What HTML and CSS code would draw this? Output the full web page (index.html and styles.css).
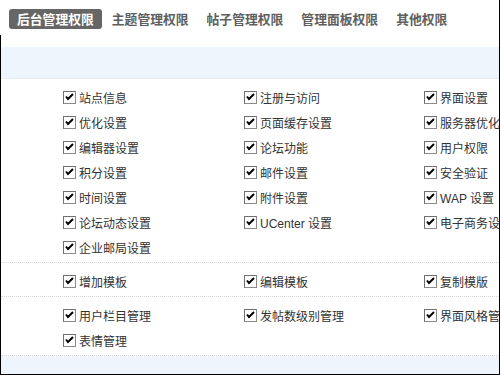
FILE: index.html
```html
<!DOCTYPE html>
<html lang="zh-CN">
<head>
<meta charset="utf-8">
<title>权限设置</title>
<link rel="stylesheet" href="styles.css">
</head>
<body>
<div class="page">
  <div class="tabs">
    <span class="tab active">后台管理权限</span>
    <span class="tab">主题管理权限</span>
    <span class="tab">帖子管理权限</span>
    <span class="tab">管理面板权限</span>
    <span class="tab">其他权限</span>
  </div>
  <div class="panel">
    <div class="band"></div>
    <div class="section">
      <label class="item"><svg class="cb" viewBox="0 0 13 13"><rect x="0.5" y="0.5" width="12" height="12" fill="#fff" stroke="#8a8a8a"/><path d="M0.5 12.5V0.5H12.5" fill="none" stroke="#6f6f6f"/><path d="M3 5.5L5 8L10 3" fill="none" stroke="#000" stroke-width="2"/></svg><span>站点信息</span></label>
      <label class="item"><svg class="cb" viewBox="0 0 13 13"><rect x="0.5" y="0.5" width="12" height="12" fill="#fff" stroke="#8a8a8a"/><path d="M0.5 12.5V0.5H12.5" fill="none" stroke="#6f6f6f"/><path d="M3 5.5L5 8L10 3" fill="none" stroke="#000" stroke-width="2"/></svg><span>注册与访问</span></label>
      <label class="item"><svg class="cb" viewBox="0 0 13 13"><rect x="0.5" y="0.5" width="12" height="12" fill="#fff" stroke="#8a8a8a"/><path d="M0.5 12.5V0.5H12.5" fill="none" stroke="#6f6f6f"/><path d="M3 5.5L5 8L10 3" fill="none" stroke="#000" stroke-width="2"/></svg><span>界面设置</span></label>
      <label class="item"><svg class="cb" viewBox="0 0 13 13"><rect x="0.5" y="0.5" width="12" height="12" fill="#fff" stroke="#8a8a8a"/><path d="M0.5 12.5V0.5H12.5" fill="none" stroke="#6f6f6f"/><path d="M3 5.5L5 8L10 3" fill="none" stroke="#000" stroke-width="2"/></svg><span>优化设置</span></label>
      <label class="item"><svg class="cb" viewBox="0 0 13 13"><rect x="0.5" y="0.5" width="12" height="12" fill="#fff" stroke="#8a8a8a"/><path d="M0.5 12.5V0.5H12.5" fill="none" stroke="#6f6f6f"/><path d="M3 5.5L5 8L10 3" fill="none" stroke="#000" stroke-width="2"/></svg><span>页面缓存设置</span></label>
      <label class="item"><svg class="cb" viewBox="0 0 13 13"><rect x="0.5" y="0.5" width="12" height="12" fill="#fff" stroke="#8a8a8a"/><path d="M0.5 12.5V0.5H12.5" fill="none" stroke="#6f6f6f"/><path d="M3 5.5L5 8L10 3" fill="none" stroke="#000" stroke-width="2"/></svg><span>服务器优化</span></label>
      <label class="item"><svg class="cb" viewBox="0 0 13 13"><rect x="0.5" y="0.5" width="12" height="12" fill="#fff" stroke="#8a8a8a"/><path d="M0.5 12.5V0.5H12.5" fill="none" stroke="#6f6f6f"/><path d="M3 5.5L5 8L10 3" fill="none" stroke="#000" stroke-width="2"/></svg><span>编辑器设置</span></label>
      <label class="item"><svg class="cb" viewBox="0 0 13 13"><rect x="0.5" y="0.5" width="12" height="12" fill="#fff" stroke="#8a8a8a"/><path d="M0.5 12.5V0.5H12.5" fill="none" stroke="#6f6f6f"/><path d="M3 5.5L5 8L10 3" fill="none" stroke="#000" stroke-width="2"/></svg><span>论坛功能</span></label>
      <label class="item"><svg class="cb" viewBox="0 0 13 13"><rect x="0.5" y="0.5" width="12" height="12" fill="#fff" stroke="#8a8a8a"/><path d="M0.5 12.5V0.5H12.5" fill="none" stroke="#6f6f6f"/><path d="M3 5.5L5 8L10 3" fill="none" stroke="#000" stroke-width="2"/></svg><span>用户权限</span></label>
      <label class="item"><svg class="cb" viewBox="0 0 13 13"><rect x="0.5" y="0.5" width="12" height="12" fill="#fff" stroke="#8a8a8a"/><path d="M0.5 12.5V0.5H12.5" fill="none" stroke="#6f6f6f"/><path d="M3 5.5L5 8L10 3" fill="none" stroke="#000" stroke-width="2"/></svg><span>积分设置</span></label>
      <label class="item"><svg class="cb" viewBox="0 0 13 13"><rect x="0.5" y="0.5" width="12" height="12" fill="#fff" stroke="#8a8a8a"/><path d="M0.5 12.5V0.5H12.5" fill="none" stroke="#6f6f6f"/><path d="M3 5.5L5 8L10 3" fill="none" stroke="#000" stroke-width="2"/></svg><span>邮件设置</span></label>
      <label class="item"><svg class="cb" viewBox="0 0 13 13"><rect x="0.5" y="0.5" width="12" height="12" fill="#fff" stroke="#8a8a8a"/><path d="M0.5 12.5V0.5H12.5" fill="none" stroke="#6f6f6f"/><path d="M3 5.5L5 8L10 3" fill="none" stroke="#000" stroke-width="2"/></svg><span>安全验证</span></label>
      <label class="item"><svg class="cb" viewBox="0 0 13 13"><rect x="0.5" y="0.5" width="12" height="12" fill="#fff" stroke="#8a8a8a"/><path d="M0.5 12.5V0.5H12.5" fill="none" stroke="#6f6f6f"/><path d="M3 5.5L5 8L10 3" fill="none" stroke="#000" stroke-width="2"/></svg><span>时间设置</span></label>
      <label class="item"><svg class="cb" viewBox="0 0 13 13"><rect x="0.5" y="0.5" width="12" height="12" fill="#fff" stroke="#8a8a8a"/><path d="M0.5 12.5V0.5H12.5" fill="none" stroke="#6f6f6f"/><path d="M3 5.5L5 8L10 3" fill="none" stroke="#000" stroke-width="2"/></svg><span>附件设置</span></label>
      <label class="item"><svg class="cb" viewBox="0 0 13 13"><rect x="0.5" y="0.5" width="12" height="12" fill="#fff" stroke="#8a8a8a"/><path d="M0.5 12.5V0.5H12.5" fill="none" stroke="#6f6f6f"/><path d="M3 5.5L5 8L10 3" fill="none" stroke="#000" stroke-width="2"/></svg><span>WAP 设置</span></label>
      <label class="item"><svg class="cb" viewBox="0 0 13 13"><rect x="0.5" y="0.5" width="12" height="12" fill="#fff" stroke="#8a8a8a"/><path d="M0.5 12.5V0.5H12.5" fill="none" stroke="#6f6f6f"/><path d="M3 5.5L5 8L10 3" fill="none" stroke="#000" stroke-width="2"/></svg><span>论坛动态设置</span></label>
      <label class="item"><svg class="cb" viewBox="0 0 13 13"><rect x="0.5" y="0.5" width="12" height="12" fill="#fff" stroke="#8a8a8a"/><path d="M0.5 12.5V0.5H12.5" fill="none" stroke="#6f6f6f"/><path d="M3 5.5L5 8L10 3" fill="none" stroke="#000" stroke-width="2"/></svg><span>UCenter 设置</span></label>
      <label class="item"><svg class="cb" viewBox="0 0 13 13"><rect x="0.5" y="0.5" width="12" height="12" fill="#fff" stroke="#8a8a8a"/><path d="M0.5 12.5V0.5H12.5" fill="none" stroke="#6f6f6f"/><path d="M3 5.5L5 8L10 3" fill="none" stroke="#000" stroke-width="2"/></svg><span>电子商务设置</span></label>
      <label class="item"><svg class="cb" viewBox="0 0 13 13"><rect x="0.5" y="0.5" width="12" height="12" fill="#fff" stroke="#8a8a8a"/><path d="M0.5 12.5V0.5H12.5" fill="none" stroke="#6f6f6f"/><path d="M3 5.5L5 8L10 3" fill="none" stroke="#000" stroke-width="2"/></svg><span>企业邮局设置</span></label>
    </div>
    <div class="section">
      <label class="item"><svg class="cb" viewBox="0 0 13 13"><rect x="0.5" y="0.5" width="12" height="12" fill="#fff" stroke="#8a8a8a"/><path d="M0.5 12.5V0.5H12.5" fill="none" stroke="#6f6f6f"/><path d="M3 5.5L5 8L10 3" fill="none" stroke="#000" stroke-width="2"/></svg><span>增加模板</span></label>
      <label class="item"><svg class="cb" viewBox="0 0 13 13"><rect x="0.5" y="0.5" width="12" height="12" fill="#fff" stroke="#8a8a8a"/><path d="M0.5 12.5V0.5H12.5" fill="none" stroke="#6f6f6f"/><path d="M3 5.5L5 8L10 3" fill="none" stroke="#000" stroke-width="2"/></svg><span>编辑模板</span></label>
      <label class="item"><svg class="cb" viewBox="0 0 13 13"><rect x="0.5" y="0.5" width="12" height="12" fill="#fff" stroke="#8a8a8a"/><path d="M0.5 12.5V0.5H12.5" fill="none" stroke="#6f6f6f"/><path d="M3 5.5L5 8L10 3" fill="none" stroke="#000" stroke-width="2"/></svg><span>复制模版</span></label>
    </div>
    <div class="section">
      <label class="item"><svg class="cb" viewBox="0 0 13 13"><rect x="0.5" y="0.5" width="12" height="12" fill="#fff" stroke="#8a8a8a"/><path d="M0.5 12.5V0.5H12.5" fill="none" stroke="#6f6f6f"/><path d="M3 5.5L5 8L10 3" fill="none" stroke="#000" stroke-width="2"/></svg><span>用户栏目管理</span></label>
      <label class="item"><svg class="cb" viewBox="0 0 13 13"><rect x="0.5" y="0.5" width="12" height="12" fill="#fff" stroke="#8a8a8a"/><path d="M0.5 12.5V0.5H12.5" fill="none" stroke="#6f6f6f"/><path d="M3 5.5L5 8L10 3" fill="none" stroke="#000" stroke-width="2"/></svg><span>发帖数级别管理</span></label>
      <label class="item"><svg class="cb" viewBox="0 0 13 13"><rect x="0.5" y="0.5" width="12" height="12" fill="#fff" stroke="#8a8a8a"/><path d="M0.5 12.5V0.5H12.5" fill="none" stroke="#6f6f6f"/><path d="M3 5.5L5 8L10 3" fill="none" stroke="#000" stroke-width="2"/></svg><span>界面风格管理</span></label>
      <label class="item"><svg class="cb" viewBox="0 0 13 13"><rect x="0.5" y="0.5" width="12" height="12" fill="#fff" stroke="#8a8a8a"/><path d="M0.5 12.5V0.5H12.5" fill="none" stroke="#6f6f6f"/><path d="M3 5.5L5 8L10 3" fill="none" stroke="#000" stroke-width="2"/></svg><span>表情管理</span></label>
    </div>
    <div class="band bottom"></div>
  </div>
</div>
</body>
</html>
```
FILE: styles.css
```css
html, body {
  margin: 0;
  padding: 0;
  background: #fff;
}
body {
  font-family: "Liberation Sans", "Noto Sans CJK SC", sans-serif;
  font-size: 12px;
  color: #333;
}
.page {
  width: 500px;
  height: 375px;
  box-sizing: border-box;
  border-right: 1px solid #000;
  border-bottom: 1px solid #000;
  display: flex;
  flex-direction: column;
  overflow: hidden;
}
.tabs {
  display: flex;
  padding: 9px 0 6px 9px;
  gap: 2px;
  flex: none;
}
.tab {
  height: 20px;
  line-height: 20px;
  padding: 0 8px;
  font-family: "Noto Sans CJK SC", sans-serif;
  font-size: 12.8px;
  font-weight: bold;
  color: #5e5e5e;
  border-radius: 3px;
  white-space: nowrap;
}
.tab.active {
  background: #666;
  color: #fff;
}
.panel {
  flex: 1;
  display: flex;
  flex-direction: column;
  border-left: 1px solid #000;
  padding-top: 12px;
  min-height: 0;
}
.band {
  height: 31px;
  background: #eff5fc;
  border-bottom: 1px dotted #dfe5ec;
  flex: none;
}
.band.bottom {
  flex: 1;
  height: auto;
  border-bottom: none;
}
.section {
  display: grid;
  grid-template-columns: 181px 180px 180px;
  grid-auto-rows: 25px;
  padding: 6px 0 2px 62px;
  border-bottom: 1px dotted #d8d8d8;
}
.section:last-of-type {
  border-bottom: none;
}
.item {
  display: flex;
  align-items: center;
  white-space: nowrap;
  color: #333;
}
.cb {
  width: 13px;
  height: 13px;
  flex: none;
  margin-right: 3px;
}
```
